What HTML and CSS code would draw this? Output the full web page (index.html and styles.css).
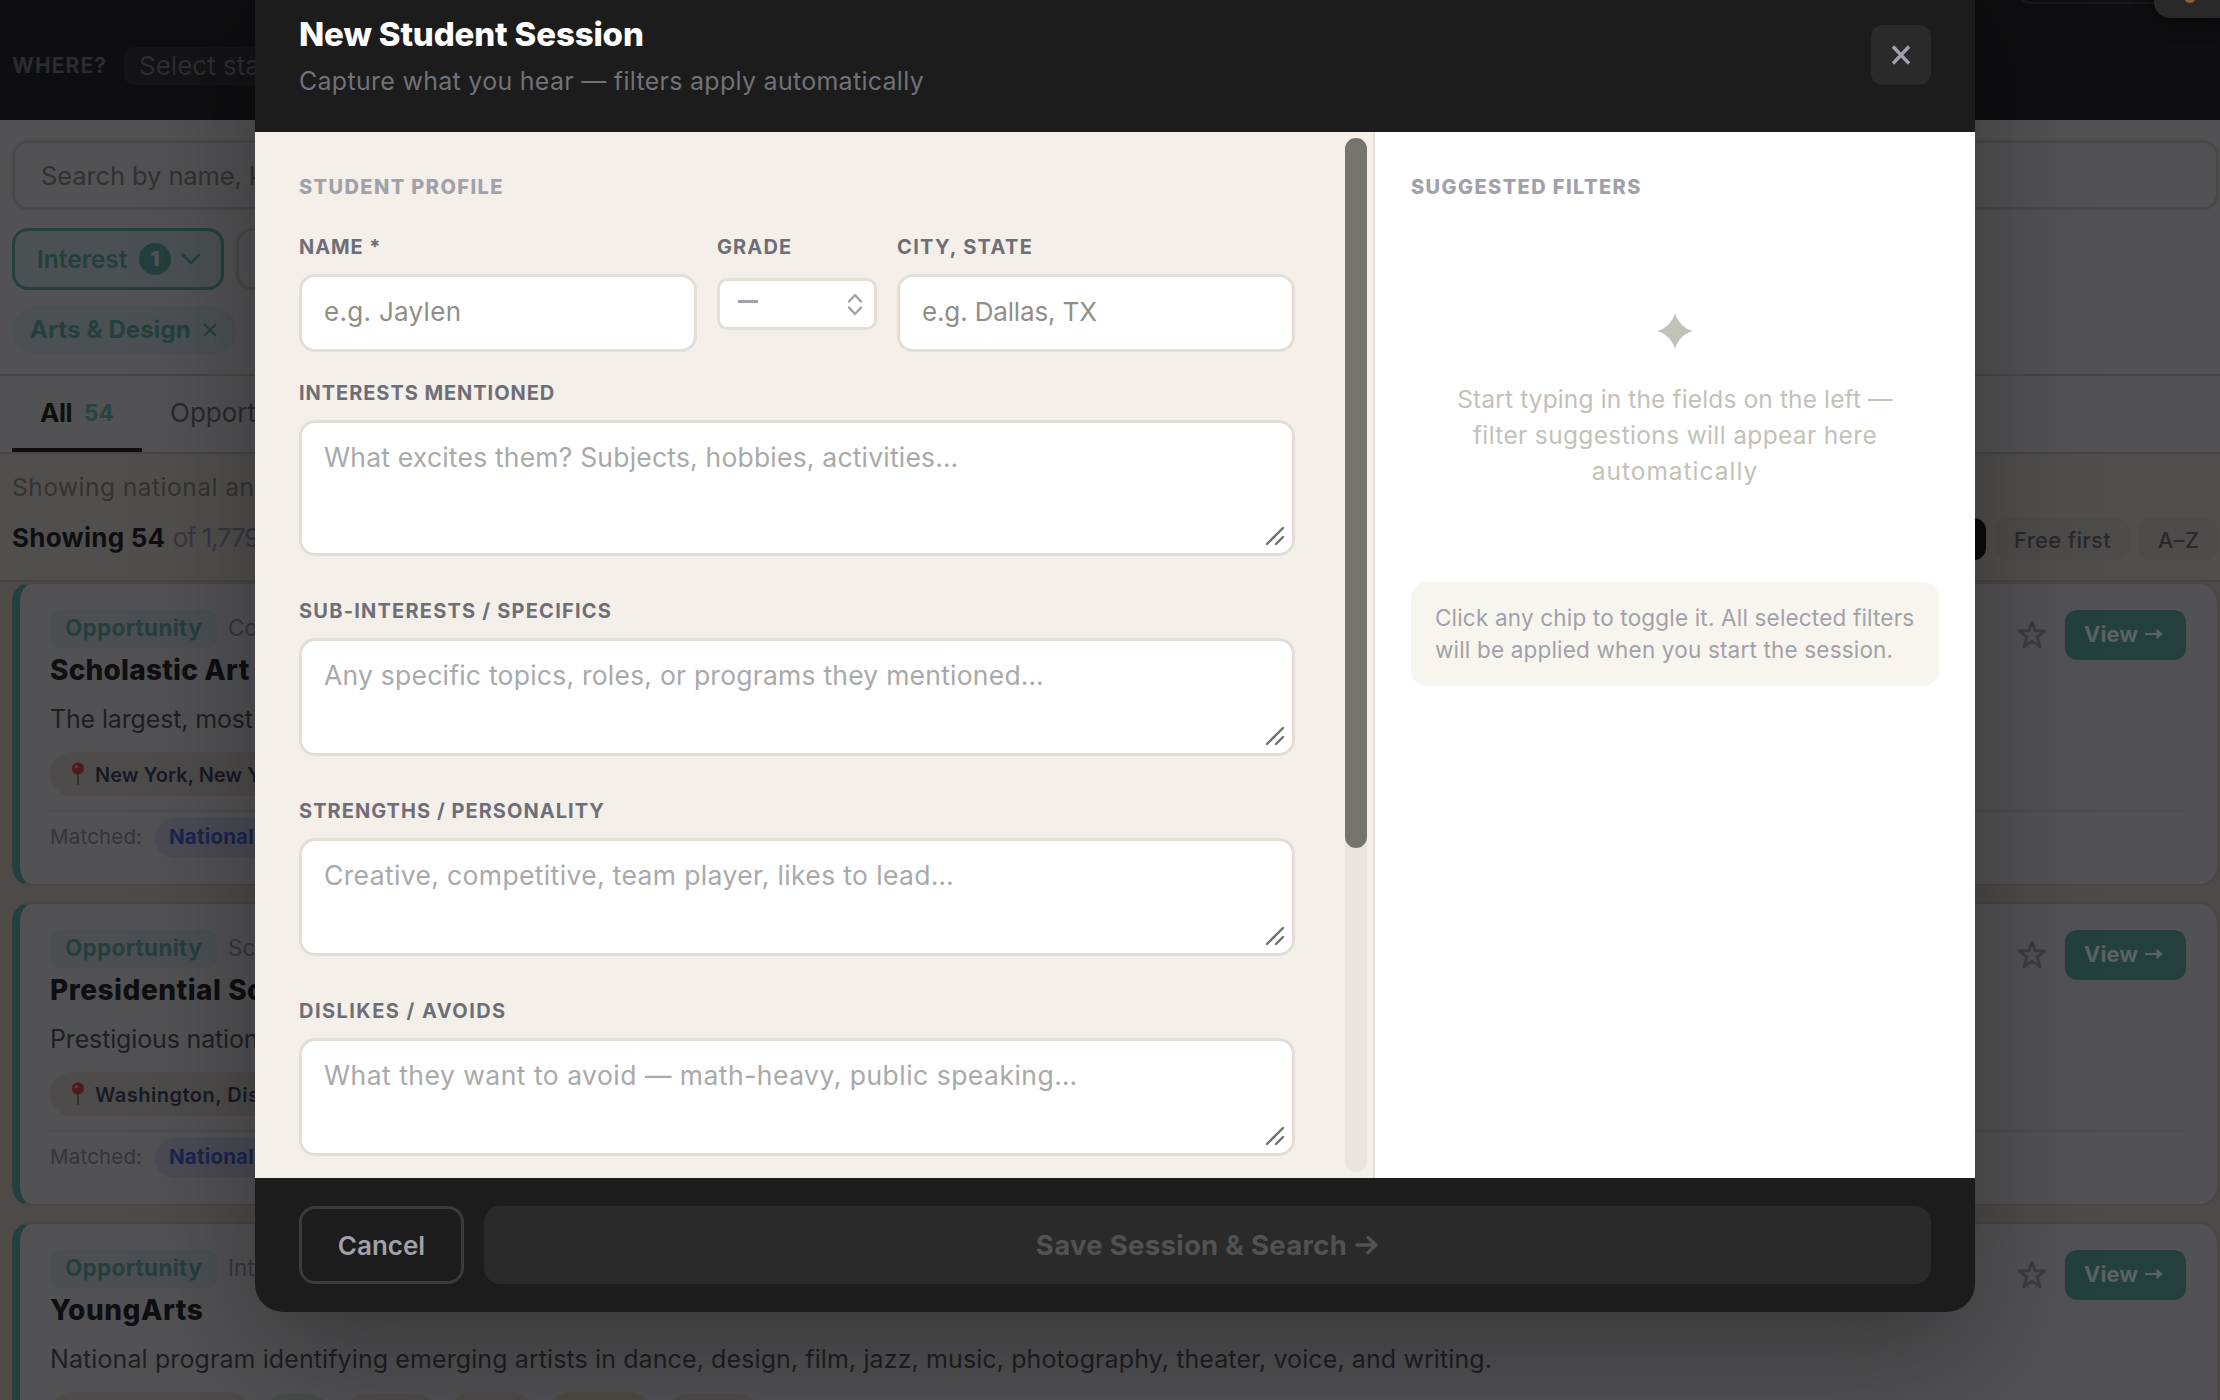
FILE: index.html
```html
<!DOCTYPE html>
<html lang="en">
<head>
<meta charset="utf-8">
<title>New Student Session</title>
<link rel="stylesheet" href="styles.css">
</head>
<body>
<svg width="0" height="0" class="defs" aria-hidden="true">
  <symbol id="grip" viewBox="0 0 20 20"><path d="M2 18 18 2M11 18 18 11" fill="none" stroke="#6f6f6f" stroke-width="2.4" stroke-linecap="round"/></symbol>
  <symbol id="star" viewBox="0 0 30 30"><path d="M15 2.2 18.3 11H27.6L20.2 16.8 23 26.6 15 21.2 7 26.6 9.8 16.8 2.4 11H11.7Z" fill="none" stroke="currentColor" stroke-width="3" stroke-linejoin="round"/></symbol>
  <symbol id="arrow" viewBox="0 0 18 14"><path d="M0 7H13" stroke="currentColor" stroke-width="2.2"/><path d="M11.5 1.500 18 7 11.5 12.500Z" fill="currentColor"/></symbol>
  <symbol id="pin" viewBox="0 0 14 24"><path d="M7 10V22" stroke="#302f31" stroke-width="2" stroke-linecap="round"/><circle cx="7" cy="6.5" r="6" fill="#4f1a18"/><circle cx="5.4" cy="4.8" r="1.8" fill="#6a3836"/></symbol>
</svg>
<div class="page">
  <header class="topbar">
    <span class="where">WHERE?</span>
    <div class="state">Select sta</div>
    <div class="top-pill"></div>
    <div class="top-avatar"><i></i></div>
  </header>
  <section class="filters">
    <div class="search">Search by name, k</div>
    <div class="filter-row">
      <div class="filter on"><span>Interest</span><b>1</b><svg width="20" height="12" viewBox="0 0 20 12"><path d="M2 2 10 10 18 2" fill="none" stroke="currentColor" stroke-width="2.6" stroke-linecap="round" stroke-linejoin="round"/></svg></div>
      <div class="filter"></div>
    </div>
    <div class="chip"><span>Arts &amp; Design</span><svg width="14" height="14" viewBox="0 0 14 14"><path d="M1 1 13 13M13 1 1 13" stroke="currentColor" stroke-width="2.2"/></svg></div>
  </section>
  <nav class="tabs">
    <div class="tab active"><span>All</span><em>54</em></div>
    <div class="tab">Opport</div>
  </nav>
  <section class="results">
    <div class="scope">Showing national an</div>
    <div class="count"><b>Showing 54</b> <span>of 1,779</span></div>
    <div class="sorts"><i class="sort dark"></i><span class="sort free">Free first</span><span class="sort alpha">A–Z</span></div>
  </section>
  <main class="cards">
    <article class="card">
      <div class="meta"><span class="badge">Opportunity</span><span class="kind">Co</span></div>
      <h3>Scholastic Art</h3>
      <p class="snug">The largest, most</p>
      <div class="place"><svg width="14" height="24"><use href="#pin"/></svg><span>New York, New Y</span></div>
      <div class="match"><span>Matched:</span><b>National</b></div>
      <div class="actions"><svg width="30" height="30"><use href="#star"/></svg><span class="view"><span>View</span><svg width="18" height="14"><use href="#arrow"/></svg></span></div>
    </article>
    <article class="card">
      <div class="meta"><span class="badge">Opportunity</span><span class="kind">Sc</span></div>
      <h3 class="airy">Presidential Sc</h3>
      <p class="snug">Prestigious nation</p>
      <div class="place airy"><svg width="14" height="24"><use href="#pin"/></svg><span>Washington, Dis</span></div>
      <div class="match"><span>Matched:</span><b>National</b></div>
      <div class="actions"><svg width="30" height="30"><use href="#star"/></svg><span class="view"><span>View</span><svg width="18" height="14"><use href="#arrow"/></svg></span></div>
    </article>
    <article class="card">
      <div class="meta"><span class="badge">Opportunity</span><span class="kind">Int</span></div>
      <h3 class="airy">YoungArts</h3>
      <p>National program identifying emerging artists in dance, design, film, jazz, music, photography, theater, voice, and writing.</p>
      <div class="tags"><i class="tag-place"></i><i class="tag-green"></i><i class="tag-a"></i><i class="tag-b"></i><i class="tag-amber"></i><i class="tag-c"></i></div>
      <div class="actions"><svg width="30" height="30"><use href="#star"/></svg><span class="view"><span>View</span><svg width="18" height="14"><use href="#arrow"/></svg></span></div>
    </article>
  </main>
</div>

<div class="modal" role="dialog">
  <header class="modal-head">
    <div>
      <h2>New Student Session</h2>
      <p>Capture what you hear — filters apply automatically</p>
    </div>
    <button class="close" aria-label="Close"><svg width="20" height="20" viewBox="0 0 20 20"><path d="M2 1.500 18 18.500M18 1.500 2 18.500" stroke="#a1a1aa" stroke-width="3.300"/></svg></button>
  </header>
  <div class="modal-body">
    <section class="form">
      <div class="fields">
        <h4>STUDENT PROFILE</h4>
        <div class="row">
          <div class="field name"><label>NAME *</label><div class="input">e.g. Jaylen</div></div>
          <div class="field grade"><label>GRADE</label><div class="select"><i></i><svg width="18" height="24" viewBox="0 0 18 24"><path d="M3 9.5 9 3 15 9.5M3 15.5 9 22 15 15.5" fill="none" stroke="#a1a1aa" stroke-width="2.4" stroke-linecap="round" stroke-linejoin="round"/></svg></div></div>
          <div class="field city"><label>CITY, STATE</label><div class="input">e.g. Dallas, TX</div></div>
        </div>
        <div class="field interests"><label>INTERESTS MENTIONED</label><div class="area">What excites them? Subjects, hobbies, activities…<svg class="grip" width="20" height="20"><use href="#grip"/></svg></div></div>
        <div class="field specifics"><label>SUB-INTERESTS / SPECIFICS</label><div class="area">Any specific topics, roles, or programs they mentioned…<svg class="grip" width="20" height="20"><use href="#grip"/></svg></div></div>
        <div class="field strengths"><label>STRENGTHS / PERSONALITY</label><div class="area">Creative, competitive, team player, likes to lead…<svg class="grip" width="20" height="20"><use href="#grip"/></svg></div></div>
        <div class="field dislikes"><label>DISLIKES / AVOIDS</label><div class="area">What they want to avoid — math-heavy, public speaking…<svg class="grip" width="20" height="20"><use href="#grip"/></svg></div></div>
      </div>
      <div class="track"><div class="thumb"></div></div>
    </section>
    <aside class="side">
      <h4>SUGGESTED FILTERS</h4>
      <svg class="spark" width="36" height="36" viewBox="0 0 36 36"><path d="M18 0C20.500 9 27 15.500 36 18C27 20.500 20.500 27 18 36C15.500 27 9 20.500 0 18C9 15.500 15.500 9 18 0Z" fill="#c4c1b8"/></svg>
      <p class="empty">Start typing in the fields on the left —<br><span class="mid">filter suggestions will appear here</span><br><span class="last">automatically</span></p>
      <p class="hint">Click any chip to toggle it. All selected filters<br>will be applied when you start the session.</p>
    </aside>
  </div>
  <footer class="modal-foot">
    <button class="cancel">Cancel</button>
    <button class="save"><span>Save Session &amp; Search</span><svg width="24" height="20" viewBox="0 0 24 20"><path d="M2 10H21M13 2.500 21 10 13 17.500" fill="none" stroke="currentColor" stroke-width="3.400" stroke-linecap="round" stroke-linejoin="round"/></svg></button>
  </footer>
</div>
</body>
</html>
```
FILE: styles.css
```css
* { box-sizing: border-box; }
html, body { margin: 0; width: 2220px; height: 1400px; overflow: hidden; }
body { font-family: "Inter", sans-serif; background: #4d4a47; position: relative; }
h2, h3, h4, p { margin: 0; }
button { font-family: inherit; padding: 0; border: 0; }
.defs { position: absolute; }
svg { flex: none; display: block; }

/* dimmed page behind the dialog */
.page { height: 1400px; overflow: hidden; display: flex; flex-direction: column; white-space: nowrap; }
.topbar { height: 120px; flex: none; background: #0e0e10; position: relative; display: flex; padding: 47px 0 0 12px; gap: 18px; }
.where { width: 94px; font-size: 21px; font-weight: 700; line-height: 38px; letter-spacing: 1.1px; color: #2c2c2e; }
.state { width: 400px; height: 38px; border-radius: 10px; background: #141416; color: #2e2e30; font-size: 26px; line-height: 38px; padding-left: 15px; }
.top-pill { position: absolute; left: 2017px; top: -40px; width: 180px; height: 44px; border: 2px solid #1a1a1c; border-radius: 14px; }
.top-avatar { position: absolute; left: 2154px; top: -50px; width: 80px; height: 68px; border-radius: 16px; background: #292929; box-shadow: 0 4px 20px rgba(0,0,0,.4); }
.top-avatar i { position: absolute; left: 30px; bottom: 15px; width: 12px; height: 12px; border-radius: 50%; background: #8a6428; }

.filters { height: 256px; flex: none; background: #525254; border-bottom: 2px solid #474543; padding: 20px 1px 0 12px; }
.search { height: 70px; border: 3px solid #4b4947; border-radius: 16px; padding-left: 26px; font-size: 25.500px; letter-spacing: -.1px; line-height: 65px; color: #33312f; }
.filter-row { display: flex; gap: 12px; margin-top: 18px; height: 62px; }
.filter { width: 200px; border: 3px solid #4b4846; border-radius: 16px; }
.filter.on { width: 212px; border-color: #24403c; background: #4b5052; color: #24403c; display: flex; align-items: center; padding-left: 22px; font-size: 24.500px; font-weight: 600; }
.filter.on > span { width: 102px; }
.filter.on b { width: 32px; height: 32px; border-radius: 50%; background: #24403c; color: #525254; font-size: 20px; line-height: 32px; text-align: center; margin-right: 10px; }
.chip { display: flex; align-items: center; width: 224px; height: 48px; margin-top: 16px; border-radius: 24px; background: #4b5052; color: #24403c; padding-left: 18px; font-size: 24px; font-weight: 700; }
.chip > span { width: 173px; letter-spacing: .1px; margin-top: -2px; }

.tabs { height: 78px; flex: none; background: #525254; border-bottom: 2px solid #474543; display: flex; padding-left: 12px; }
.tab { height: 76px; line-height: 74px; padding-left: 28px; font-size: 26px; color: #29292c; }
.tab.active { width: 130px; border-bottom: 4px solid #0f0f11; display: flex; font-weight: 700; color: #0f0f11; }
.tab.active span { width: 44px; letter-spacing: -.5px; }
.tab em { font-style: normal; font-size: 22.500px; color: #27443f; font-weight: 700; }

.results { height: 128px; flex: none; background: #504f4e; border-bottom: 2px solid #484442; padding: 20px 0 0 12px; position: relative; }
.scope { font-size: 24.500px; letter-spacing: .5px; line-height: 26px; color: #343331; height: 50px; }
.count { font-size: 26px; line-height: 28px; color: #38373e; }
.count b { color: #0f0f11; letter-spacing: .25px; }
.count span { letter-spacing: -1.2px; }
.sorts { position: absolute; right: 2px; top: 64px; display: flex; gap: 10px; }
.sort { height: 42px; border-radius: 12px; background: #4e4c4a; color: #28282d; font-size: 22px; font-weight: 500; line-height: 44px; letter-spacing: .3px; text-align: center; }
.dark { width: 120px; background: #0b0b0d; }
.free { width: 133px; }
.alpha { width: 79px; }

.cards { padding: 0 1px 0 12px; display: flex; flex-direction: column; gap: 16px; }
.card { position: relative; height: 304px; flex: none; background: #525254; border: 2px solid #494644; border-left: 8px solid #24403c; border-radius: 20px; padding: 26px 31px 0 30px; }
.meta { display: flex; gap: 11px; height: 38px; line-height: 36px; font-size: 22.500px; color: #37373c; }
.badge { width: 167px; height: 38px; border-radius: 10px; background: #4b4f51; color: #24403c; text-align: center; font-weight: 700; letter-spacing: .3px; }
.card h3 { font-size: 28px; font-weight: 800; line-height: 40px; letter-spacing: .2px; color: #0f0f11; margin-top: 2px; }
.card h3.airy { letter-spacing: .5px; }
.card p { font-size: 25px; line-height: 34px; letter-spacing: .1px; color: #1f1f22; margin-top: 12px; }
.card p.snug { letter-spacing: -.15px; }
.place { display: flex; align-items: center; width: 400px; height: 44px; margin-top: 16px; border-radius: 22px; background: #4e4c4a; padding-left: 21px; font-size: 20px; font-weight: 600; color: #171a25; }
.place.airy { letter-spacing: .5px; }
.place svg { margin-right: 10px; }
.place span { margin-top: 1px; }
.match { display: flex; align-items: flex-start; margin-top: 14px; border-top: 2px solid #4e4d4e; padding-top: 6px; font-size: 20.500px; line-height: 38px; color: #353538; }
.match > span { width: 105px; letter-spacing: .2px; }
.match b { width: 150px; height: 40px; border-radius: 20px; background: #4a4b53; color: #1a2450; padding-left: 14px; line-height: 38px; letter-spacing: .2px; }
.actions { position: absolute; right: 31px; top: 26px; display: flex; align-items: center; gap: 18px; color: #3d3d40; }
.view { width: 121px; height: 50px; border-radius: 12px; background: #24403c; display: flex; align-items: center; padding-left: 19px; font-size: 22px; font-weight: 700; color: #5a6262; }
.view > span { width: 61px; line-height: 46px; height: 48px; }
.view svg { margin-top: -2px; }
.tags { display: flex; align-items: flex-start; gap: 14px; margin-top: 16px; }
.tags i { height: 44px; border-radius: 22px; background: #4e4c4a; }
.tags .tag-place { width: 200px; }
.tags .tag-green { width: 66px; margin-top: 2px; background: #464e48; }
.tags .tag-a { width: 92px; margin-top: 2px; }
.tags .tag-b { width: 84px; }
.tags .tag-amber { width: 104px; background: #4e4b44; }
.tags .tag-c { width: 94px; margin-top: 2px; }

/* dialog */
.modal { position: absolute; left: 255px; top: -40px; width: 1720px; height: 1352px; border-radius: 28px; overflow: hidden; background: #1c1c1c; box-shadow: 0 40px 120px rgba(0,0,0,.32); display: flex; flex-direction: column; white-space: nowrap; }
.modal-head { height: 172px; flex: none; padding: 56px 44px 0; display: flex; justify-content: space-between; }
.modal-head h2 { font-size: 33px; line-height: 36px; font-weight: 800; letter-spacing: -.15px; color: #fff; }
.modal-head p { font-size: 25px; line-height: 30px; letter-spacing: .28px; margin-top: 14px; color: #71717a; }
.close { width: 60px; height: 60px; margin-top: 9px; border-radius: 12px; background: #2a2a2a; display: grid; place-items: center; }
.modal-body { height: 1046px; flex: none; display: flex; }
.form { width: 1120px; background: #f4efe9; border-right: 2px solid #e2ddd5; padding: 41px 6px 0 44px; display: flex; justify-content: space-between; }
.fields { width: 996px; }
h4 { font-size: 20px; line-height: 28px; font-weight: 800; letter-spacing: 1.4px; color: #a1a1aa; }
label { display: block; font-size: 20px; line-height: 28px; font-weight: 700; letter-spacing: 1.1px; color: #6e6e78; }
.row { display: grid; grid-template-columns: 1fr 160px 1fr; gap: 20px; margin-top: 32px; height: 119px; }
.input, .area { position: relative; margin-top: 13px; background: #fff; border: 3px solid #e3ded6; border-radius: 16px; padding-left: 22px; }
.input { height: 78px; line-height: 70px; font-size: 26px; color: #928e83; }
.select { height: 52px; margin-top: 17px; background: #fff; border: 3px solid #e3ded6; border-radius: 10px; padding: 0 10px 0 18px; display: flex; justify-content: space-between; align-items: center; }
.select i { width: 20px; height: 3px; background: #a1a1aa; margin-top: -6px; }
.area { height: 118px; font-size: 26.500px; line-height: 39px; padding-top: 15px; color: #a9a9a9; margin-bottom: 41px; }
.interests { margin-top: 27px; }
.interests .area { height: 136px; letter-spacing: .2px; }
.specifics .area { letter-spacing: .23px; }
.strengths .area { letter-spacing: .36px; }
.dislikes .area { letter-spacing: .48px; }
.name label { letter-spacing: .9px; }
.name .input { letter-spacing: .3px; }
.city label { letter-spacing: 1.35px; }
.city .input { letter-spacing: -.15px; }
.interests label { letter-spacing: .95px; }
.specifics label { letter-spacing: 1.22px; }
.strengths label { letter-spacing: 1.04px; }
.dislikes label { letter-spacing: 1.45px; }
.grip { position: absolute; right: 7px; bottom: 7px; }
.track { width: 22px; height: 1034px; margin-top: -35px; border-radius: 11px; background: #e9e4de; }
.thumb { height: 710px; border-radius: 11px; background: #75746f; }
.side { flex: 1; background: #fff; padding: 41px 36px 0; }
.spark { margin: 112px auto 0; }
.empty { font-size: 24.500px; line-height: 36px; letter-spacing: .13px; text-align: center; color: #c4c1b8; margin-top: 32px; }
.empty .mid { letter-spacing: .35px; }
.empty .last { letter-spacing: 1px; }
.hint { margin-top: 93px; height: 104px; border-radius: 16px; background: #f8f5ee; padding: 20px 0 0 24px; font-size: 22.500px; line-height: 32px; letter-spacing: .18px; color: #a1a1aa; }
.modal-foot { flex: 1; padding: 28px 44px; display: flex; gap: 20px; }
.cancel { width: 165px; height: 78px; border: 3px solid #3a3a3a; border-radius: 16px; background: none; color: #a1a1aa; font-size: 26px; font-weight: 600; }
.save { flex: 1; height: 78px; border-radius: 16px; background: #2a2a2a; color: #525252; font-size: 27.500px; font-weight: 700; letter-spacing: .3px; display: flex; align-items: center; justify-content: center; gap: 8px; }
```
